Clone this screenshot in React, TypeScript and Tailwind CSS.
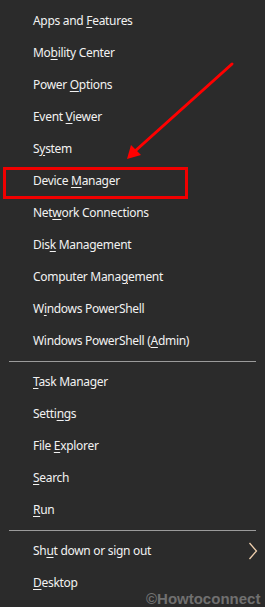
import React from 'react';

type Item = { pre: string; key: string; post: string };

const groupA: Item[] = [
  { pre: 'Apps and ', key: 'F', post: 'eatures' },
  { pre: 'Mo', key: 'b', post: 'ility Center' },
  { pre: 'Power ', key: 'O', post: 'ptions' },
  { pre: 'Event ', key: 'V', post: 'iewer' },
  { pre: 'S', key: 'y', post: 'stem' },
  { pre: 'Device ', key: 'M', post: 'anager' },
  { pre: 'Net', key: 'w', post: 'ork Connections' },
  { pre: 'Dis', key: 'k', post: ' Management' },
  { pre: 'Computer Mana', key: 'g', post: 'ement' },
  { pre: 'W', key: 'i', post: 'ndows PowerShell' },
  { pre: 'Windows PowerShell (', key: 'A', post: 'dmin)' },
];

const groupB: Item[] = [
  { pre: '', key: 'T', post: 'ask Manager' },
  { pre: 'Setti', key: 'n', post: 'gs' },
  { pre: 'File ', key: 'E', post: 'xplorer' },
  { pre: '', key: 'S', post: 'earch' },
  { pre: '', key: 'R', post: 'un' },
];

function Row({ item, boxed, arrow }: { item: Item; boxed?: boolean; arrow?: boolean }) {
  return (
    <div className="relative h-8 flex items-center pl-[33px] pr-3 text-[12px] tracking-[-0.3px] text-[#f2f2f2]">
      <span>
        {item.pre}
        <u className="underline-offset-[2px]">{item.key}</u>
        {item.post}
      </span>
      {boxed && (
        <div className="absolute left-[3px] top-[2px] w-[185px] h-8 border-[3px] border-[#f00000]" />
      )}
      {arrow && (
        <svg
          className="absolute right-[7px] top-1/2 -translate-y-1/2"
          width="10"
          height="18"
          viewBox="0 0 10 18"
        >
          <path d="M1.5 1 L8.5 9 L1.5 17" fill="none" stroke="#efcfae" strokeWidth="1.3" />
        </svg>
      )}
    </div>
  );
}

function Separator() {
  return <div className="mx-[9px] my-[4px] h-px bg-[#9b9b9b]" />;
}

export default function App() {
  return (
    <div
      className="relative w-[265px] h-[607px] overflow-hidden bg-[#2b2b2b] pt-[5px]"
      style={{ fontFamily: '"Noto Sans", "Open Sans", sans-serif' }}
    >
      {groupA.map((it, i) => (
        <Row key={i} item={it} boxed={i === 5} />
      ))}
      <Separator />
      {groupB.map((it, i) => (
        <Row key={i} item={it} />
      ))}
      <Separator />
      <Row item={{ pre: 'Sh', key: 'u', post: 't down or sign out' }} arrow />
      <Row item={{ pre: '', key: 'D', post: 'esktop' }} />

      {/* red annotation arrow */}
      <svg className="absolute left-0 top-0 pointer-events-none" width="265" height="200">
        <line x1="232" y1="64" x2="134" y2="152" stroke="#ff0000" strokeWidth="3" strokeLinecap="round" />
        <polygon points="127,159 131,145 141,155" fill="#ff0000" />
      </svg>

      <div
        className="absolute left-[146px] top-[591px] text-[15px] leading-none font-bold text-[#707070]"
        style={{ fontFamily: '"Liberation Sans", Arial, sans-serif' }}
      >
        ©Howtoconnect
      </div>
    </div>
  );
}
